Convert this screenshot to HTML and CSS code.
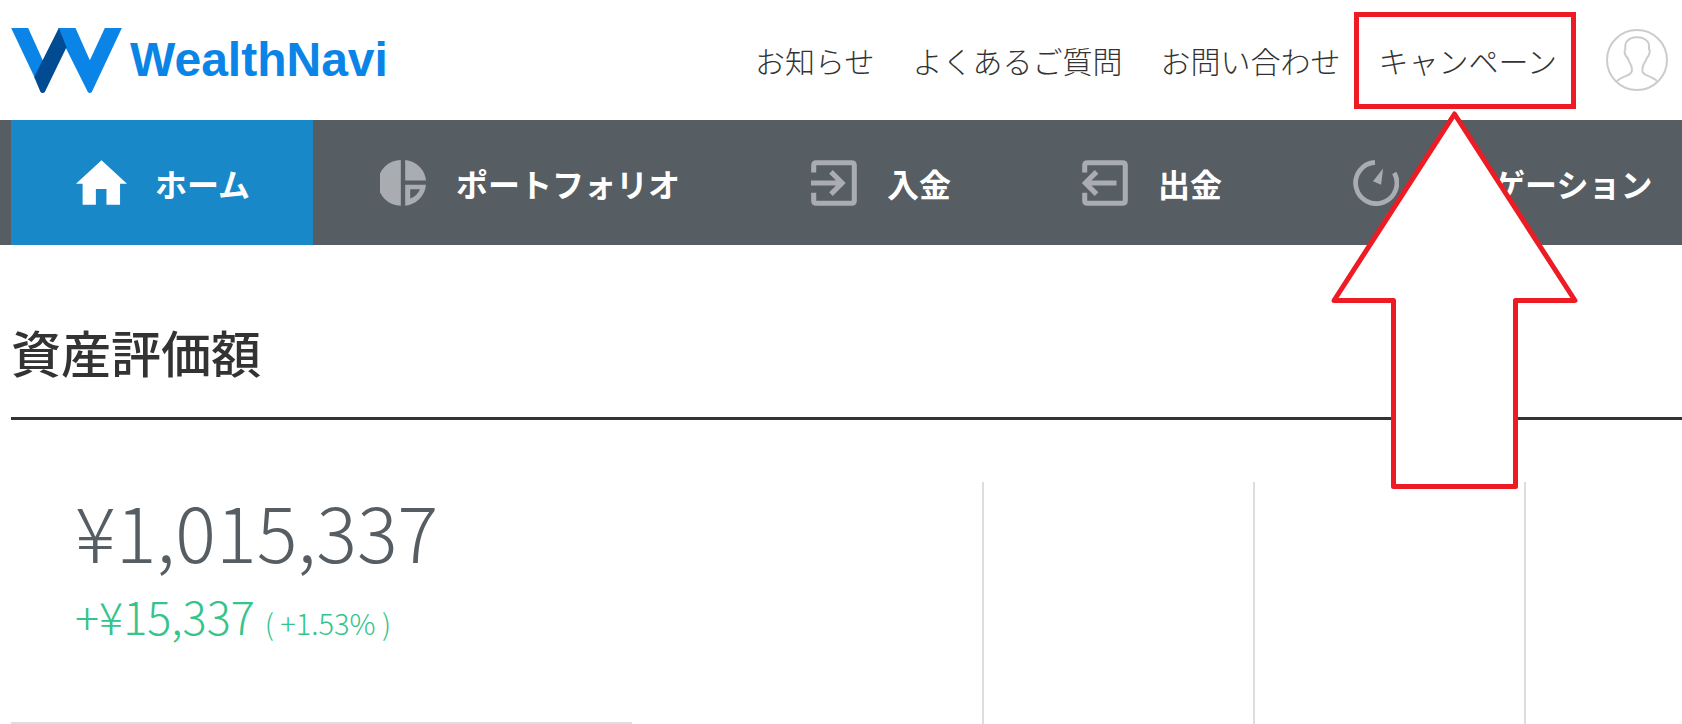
FILE: index.html
```
<!DOCTYPE html>
<html lang="ja">
<head>
    <meta charset="UTF-8" />
    <meta name="viewport" content="width=device-width, initial-scale=1.0" />
    <title>WealthNavi</title>
    <link rel="stylesheet" href="styles.css">
</head>
<body>
    <header class="header">
        <a href="#" class="logo">
            <svg class="logo-mark" viewBox="35 90 332 195" aria-hidden="true">
                <path fill="#0a84e6" d="M35 90H86L131 190L105 238Z" />
                <path fill="#0a84e6" d="M176 90H228L271 187L316 90H367L277 282Q275 285 271 285Q267 285 265 282L198 148Z" />
                <path fill="#004b91" d="M178 90L201 148L136 282Q134 285 130 285Q125 285 123 282L104 237Z" />
            </svg>
            <span class="logo-text">WealthNavi</span>
        </a>
        <div class="header-links">
            <a href="#">お知らせ</a>
            <a href="#">よくあるご質問</a>
            <a href="#">お問い合わせ</a>
            <a href="#">キャンペーン</a>
        </div>
        <button class="avatar" aria-label="アカウント">
            <svg viewBox="1218 96 186 186" fill="none" stroke="#cccccc" stroke-width="6">
                <circle cx="1311" cy="189" r="90" />
                <path d="M1250 252Q1262 243 1280 236Q1296 230 1296 218Q1296 207 1288 195Q1284 189 1284 184Q1275 178 1274 165Q1273 158 1276 157Q1275 138 1280 134Q1290 121 1311 121Q1332 121 1343 134Q1348 138 1347 157Q1350 158 1349 166Q1347 178 1340 184Q1339 190 1334 196Q1327 207 1327 220Q1327 230 1340 235Q1362 243 1371 252" />
            </svg>
        </button>
        <!-- campaign callout -->
        <svg class="callout" viewBox="1330 10 250 482" aria-hidden="true">
            <rect x="1356.5" y="14.5" width="217" height="92" />
            <path class="callout-arrow" d="M1454.5 114L1575 300.5H1515.5V486.5H1393.5V300.5H1334Z" />
        </svg>
    </header>

    <nav class="nav">
        <a href="#" class="nav-item active">
            <svg class="icon-home" viewBox="228 480 154 135" fill="#ffffff" aria-hidden="true">
                <path d="M305 480L382 551H361V615H320V567H288V615H248V551H228Z" />
            </svg>
            ホーム
        </a>
        <a href="#" class="nav-item">
            <svg class="icon" viewBox="62 120 137 137" fill="#a9adb1" aria-hidden="true">
                <path d="M124 120A68 68 0 0 0 124 256Z" />
                <path d="M137 120A68 68 0 0 1 199 181H137Z" />
                <path fill-rule="evenodd" d="M137 194H199A68 68 0 0 1 137 256ZM152 207V235Q173 227 181 207Z" />
            </svg>
            ポートフォリオ
        </a>
        <a href="#" class="nav-item">
            <svg class="icon" viewBox="102 123 136 136" fill="none" stroke="#a9adb1" stroke-width="15" aria-hidden="true">
                <path d="M110 160V139Q110 131 118 131H222Q230 131 230 139V243Q230 251 222 251H118Q110 251 110 243V220" />
                <path d="M102 191H192M161 158L194 191L161 224" />
            </svg>
            入金
        </a>
        <a href="#" class="nav-item">
            <svg class="icon" viewBox="912 123 136 136" fill="none" stroke="#a9adb1" stroke-width="15" aria-hidden="true">
                <path d="M920 160V139Q920 131 928 131H1032Q1040 131 1040 139V243Q1040 251 1032 251H928Q920 251 920 243V220" />
                <path d="M1014 191H924M955 158L922 191L955 224" />
            </svg>
            出金
        </a>
        <a href="#" class="nav-item">
            <svg class="icon" viewBox="462 480 136 136" aria-hidden="true">
                <path fill="none" stroke="#a9adb1" stroke-width="14" d="M527 487A61 61 0 1 0 584 518" />
                <path fill="#a9adb1" d="M551 505L545 553L521 543Z" />
            </svg>
            ナビゲーション
        </a>
    </nav>

    <main class="main">
        <h1>資産評価額</h1>
        <div class="assets">
            <div class="summary">
                <div class="amount">¥1,015,337</div>
                <div class="profit">+¥15,337 <small>( +1.53% )</small></div>
            </div>
            <div class="column"></div>
            <div class="column"></div>
            <div class="column"></div>
        </div>
    </main>
</body>
</html>
```
FILE: styles.css
```
* {
    box-sizing: border-box;
}

html, body {
    height: 100%;
    margin: 0;
    padding: 0;
}

body {
    display: flex;
    flex-direction: column;
    overflow: hidden;
    background: #ffffff;
    color: #333333;
    font-family: "Noto Sans CJK JP", sans-serif;
}

a {
    color: inherit;
    text-decoration: none;
}

svg {
    display: block;
    flex-shrink: 0;
}

.header {
    position: relative;
    display: flex;
    align-items: center;
    flex-shrink: 0;
    height: 120px;
    padding: 0 14px 0 11px;
    white-space: nowrap;
}

.logo {
    display: flex;
    align-items: center;
    gap: 8px;
}

.logo-mark {
    width: 111px;
    height: 65px;
}

.logo-text {
    color: #0a84e6;
    font-family: "Liberation Sans", sans-serif;
    font-size: 48px;
    font-weight: 700;
    line-height: 56px;
}

.header-links {
    display: flex;
    gap: 38px;
    margin-left: auto;
    font-size: 30px;
    font-weight: 300;
}

.avatar {
    width: 62px;
    height: 62px;
    margin-left: 49px;
    padding: 0;
    background: none;
    border: none;
    cursor: pointer;
}

.callout {
    position: absolute;
    top: 10px;
    right: 102px;
    z-index: 10;
    width: 250px;
    height: 482px;
    fill: none;
    stroke: #ed1c24;
    stroke-width: 5;
    pointer-events: none;
}

.callout-arrow {
    fill: #ffffff;
    stroke-linejoin: round;
}

.nav {
    display: flex;
    flex-shrink: 0;
    gap: 1px;
    height: 125px;
    padding-left: 11px;
    overflow: hidden;
    background: #565d63;
}

.nav-item {
    display: flex;
    align-items: center;
    flex-shrink: 0;
    gap: 30px;
    padding: 0 64px 0 66px;
    color: #ffffff;
    font-size: 32px;
    font-weight: 700;
}

.nav-item.active {
    gap: 28px;
    padding-right: 63px;
    padding-left: 65px;
    background: #1888c8;
}

.icon {
    width: 46px;
    height: 46px;
}

.icon-home {
    width: 51px;
    height: 45px;
}

.main {
    display: flex;
    flex: 1;
    flex-direction: column;
    padding-left: 11px;
}

h1 {
    margin: 0;
    padding: 70px 0 30px;
    border-bottom: 3px solid #333333;
    font-size: 50px;
    font-weight: 500;
    line-height: 72px;
}

.assets {
    display: grid;
    flex: 1;
    grid-template-columns: 971fr 271fr 271fr 158fr;
    padding-top: 62px;
}

.summary {
    width: 64%;
    padding-left: 64px;
    border-bottom: 2px solid #dddddd;
    font-weight: 300;
    white-space: nowrap;
}

.amount {
    color: #565d63;
    font-size: 76px;
    line-height: 96px;
}

.profit {
    color: #35c48b;
    font-size: 45px;
    line-height: 76px;
}

.profit small {
    font-size: 29px;
}

.column {
    border-left: 2px solid #dddddd;
}
```
